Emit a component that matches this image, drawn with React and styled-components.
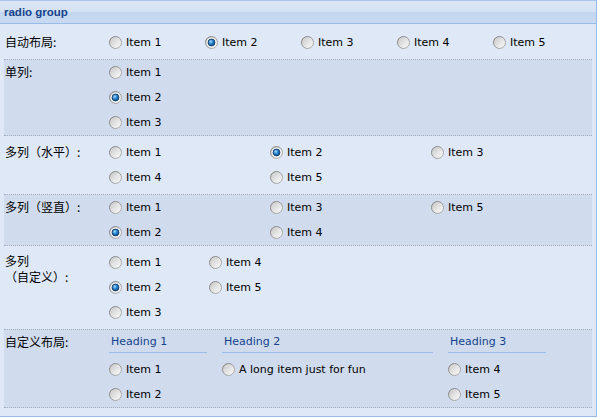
import React, { useId } from "react";
import styled, { createGlobalStyle } from "styled-components";

const GlobalStyle = createGlobalStyle`
  html, body { margin: 0; padding: 0; background: #ffffff; }
  body { font-family: "DejaVu Sans", sans-serif; font-size: 11px; color: #000; }
`;

const Panel = styled.div`
  width: 596px;
  border-top: 1px solid #a9c5eb;
  border-right: 1px solid #99bbe8;
  border-bottom: 1px solid #99bbe8;
`;

const Header = styled.div`
  height: 22px;
  display: flex;
  align-items: center;
  padding-left: 4px;
  background: linear-gradient(#dce7f6 0, #d5e2f3 48%, #c3d6ef 52%, #c8daf1 100%);
  border-bottom: 1px solid #99bbe8;
  font-family: "Liberation Sans", Arial, sans-serif;
  font-weight: bold;
  font-size: 11.5px;
  color: #15428b;
`;

const Body = styled.div`
  background: #dfe8f6;
  padding: 2px 4px 8px 4px;
`;

const FormRow = styled.div`
  display: flex;
  align-items: flex-start;
  ${(p) =>
    p.$alt
      ? `background: #d0dcee;
         border-top: 1px dotted #a4adbd;
         border-bottom: 1px dotted #a4adbd;
         padding: 0;`
      : `padding: 4px 0 4px 0;`}
`;

const Label = styled.div`
  width: 104px;
  flex: none;
  box-sizing: border-box;
  padding: ${(p) => (p.$multi ? "3px" : "4px")} 0 0 1px;
  line-height: 16px;
  font-family: "Noto Sans CJK SC", "DejaVu Sans", sans-serif;
  font-size: 12px;
  color: #000;
`;

const Field = styled.div`
  flex: 1;
  padding-left: 1px;
`;

const Grid = styled.div`
  display: grid;
  grid-template-columns: ${(p) => p.$cols};
`;

const Columns = styled.div`
  display: flex;
  align-items: flex-start;
`;

const Column = styled.div`
  width: ${(p) => p.$w}px;
  flex: none;
  display: flex;
  flex-direction: column;
`;

const Heading = styled.div`
  width: ${(p) => p.$w}px;
  box-sizing: border-box;
  padding: 4px 0 2px 2px;
  line-height: 16px;
  color: #15428b;
  font-size: 11px;
  border-bottom: 1px solid #99bbe8;
  margin-bottom: 4px;
`;

const Item = styled.label`
  height: 25px;
  display: flex;
  align-items: center;
  gap: 4px;
  white-space: nowrap;
  font-size: 11px;
  color: #000;
`;

const RadioSvg = styled.svg`
  flex: none;
  display: block;
`;

function Radio({ checked }) {
  const id = useId().replace(/:/g, "");
  return (
    <RadioSvg width="13" height="13" viewBox="0 0 13 13">
      <defs>
        <linearGradient id={`f${id}`} x1="0" y1="0" x2="1" y2="1">
          <stop offset="0" stopColor="#c4c4c4" />
          <stop offset="0.55" stopColor="#e6e6e6" />
          <stop offset="1" stopColor="#fbfbfb" />
        </linearGradient>
        <linearGradient id={`s${id}`} x1="0" y1="0" x2="1" y2="1">
          <stop offset="0" stopColor="#7c7c7c" />
          <stop offset="1" stopColor="#b4b4b4" />
        </linearGradient>
        <radialGradient id={`b${id}`} cx="0.38" cy="0.35" r="0.7">
          <stop offset="0" stopColor="#a8dcff" />
          <stop offset="0.45" stopColor="#2d8ad4" />
          <stop offset="1" stopColor="#0d4f94" />
        </radialGradient>
      </defs>
      <circle cx="6.5" cy="6.5" r="6" fill={`url(#f${id})`} stroke={`url(#s${id})`} strokeWidth="1" />
      {checked && (
        <>
          <circle cx="6.5" cy="6.5" r="4.6" fill="#f4f4f4" />
          <circle cx="6.5" cy="6.5" r="3.4" fill={`url(#b${id})`} stroke="#0f3660" strokeWidth="0.9" />
        </>
      )}
    </RadioSvg>
  );
}

function RadioItem({ label, checked }) {
  return (
    <Item>
      <Radio checked={checked} />
      <span>{label}</span>
    </Item>
  );
}

const five = ["Item 1", "Item 2", "Item 3", "Item 4", "Item 5"];

export default function App() {
  return (
    <>
      <GlobalStyle />
      <Panel>
        <Header>radio group</Header>
        <Body>
          <FormRow>
            <Label>自动布局:</Label>
            <Field>
              <Grid $cols="repeat(5, 96px)">
                {five.map((t) => (
                  <RadioItem key={t} label={t} checked={t === "Item 2"} />
                ))}
              </Grid>
            </Field>
          </FormRow>

          <FormRow $alt>
            <Label>单列:</Label>
            <Field>
              <Column $w={200}>
                {["Item 1", "Item 2", "Item 3"].map((t) => (
                  <RadioItem key={t} label={t} checked={t === "Item 2"} />
                ))}
              </Column>
            </Field>
          </FormRow>

          <FormRow>
            <Label>多列（水平）:</Label>
            <Field>
              <Grid $cols="repeat(3, 161px)">
                {five.map((t) => (
                  <RadioItem key={t} label={t} checked={t === "Item 2"} />
                ))}
              </Grid>
            </Field>
          </FormRow>

          <FormRow $alt>
            <Label>多列（竖直）:</Label>
            <Field>
              <Columns>
                <Column $w={161}>
                  <RadioItem label="Item 1" />
                  <RadioItem label="Item 2" checked />
                </Column>
                <Column $w={161}>
                  <RadioItem label="Item 3" />
                  <RadioItem label="Item 4" />
                </Column>
                <Column $w={161}>
                  <RadioItem label="Item 5" />
                </Column>
              </Columns>
            </Field>
          </FormRow>

          <FormRow>
            <Label $multi>
              多列
              <br />
              （自定义）:
            </Label>
            <Field>
              <Columns>
                <Column $w={100}>
                  <RadioItem label="Item 1" />
                  <RadioItem label="Item 2" checked />
                  <RadioItem label="Item 3" />
                </Column>
                <Column $w={100}>
                  <RadioItem label="Item 4" />
                  <RadioItem label="Item 5" />
                </Column>
              </Columns>
            </Field>
          </FormRow>

          <FormRow $alt>
            <Label>自定义布局:</Label>
            <Field>
              <Columns>
                <Column $w={113}>
                  <Heading $w={98}>Heading 1</Heading>
                  <RadioItem label="Item 1" />
                  <RadioItem label="Item 2" />
                </Column>
                <Column $w={226}>
                  <Heading $w={211}>Heading 2</Heading>
                  <RadioItem label="A long item just for fun" />
                </Column>
                <Column $w={113}>
                  <Heading $w={98}>Heading 3</Heading>
                  <RadioItem label="Item 4" />
                  <RadioItem label="Item 5" />
                </Column>
              </Columns>
            </Field>
          </FormRow>
        </Body>
      </Panel>
    </>
  );
}
